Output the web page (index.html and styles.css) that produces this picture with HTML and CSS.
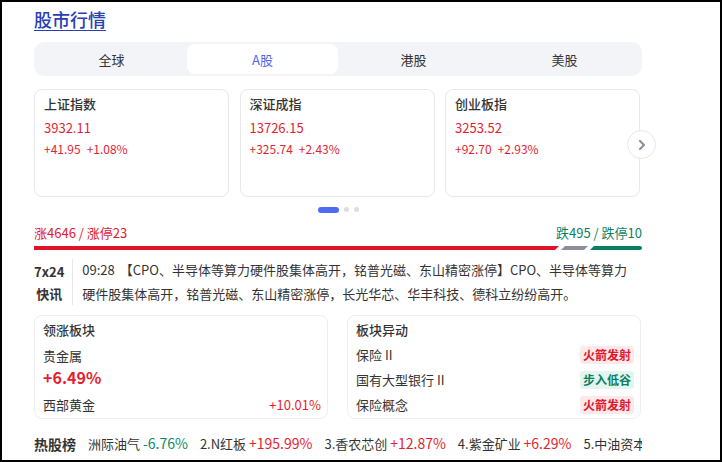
FILE: index.html
```html
<!DOCTYPE html>
<html lang="zh-CN">
<head>
  <meta charset="UTF-8" />
  <title>股市行情</title>
  <link rel="stylesheet" href="styles.css">
</head>
<body>
<div class="frame">
  <h1 class="page-title"><a href="#">股市行情</a></h1>

  <nav class="market-tabs">
    <a href="#">全球</a>
    <a href="#" class="active">A股</a>
    <a href="#">港股</a>
    <a href="#">美股</a>
  </nav>

  <div class="index-slider">
    <div class="index-cards">
      <div class="index-card">
        <div class="index-name">上证指数</div>
        <div class="index-value">3932.11</div>
        <div class="index-change"><span>+41.95</span><span>+1.08%</span></div>
      </div>
      <div class="index-card">
        <div class="index-name">深证成指</div>
        <div class="index-value">13726.15</div>
        <div class="index-change"><span>+325.74</span><span>+2.43%</span></div>
      </div>
      <div class="index-card">
        <div class="index-name">创业板指</div>
        <div class="index-value">3253.52</div>
        <div class="index-change"><span>+92.70</span><span>+2.93%</span></div>
      </div>
    </div>
    <button class="next-btn" type="button">
      <svg width="12" height="12" viewBox="0 0 12 12"><path d="M4 2 L8 6 L4 10" fill="none" stroke="#8b8fa0" stroke-width="2.2" stroke-linecap="round" stroke-linejoin="round"/></svg>
    </button>
  </div>

  <div class="dots">
    <span class="dot current"></span>
    <span class="dot"></span>
    <span class="dot"></span>
  </div>

  <div class="breadth">
    <div class="breadth-text">
      <span class="up">涨4646 / 涨停23</span>
      <span class="down">跌495 / 跌停10</span>
    </div>
    <div class="breadth-bar">
      <span class="seg-up"></span>
      <span class="seg-flat"></span>
      <span class="seg-down"></span>
    </div>
  </div>

  <div class="flash">
    <div class="flash-label">7x24<br>快讯</div>
    <p class="flash-text"><span class="time">09:28</span> 【CPO、半导体等算力硬件股集体高开，铭普光磁、东山精密涨停】CPO、半导体等算力硬件股集体高开，铭普光磁、东山精密涨停，长光华芯、华丰科技、德科立纷纷高开。</p>
  </div>

  <div class="panels">
    <div class="panel">
      <div class="panel-title">领涨板块</div>
      <div class="lead-name">贵金属</div>
      <div class="lead-pct">+6.49%</div>
      <div class="panel-row">
        <span>西部黄金</span>
        <span class="rise">+10.01%</span>
      </div>
    </div>
    <div class="panel">
      <div class="panel-title">板块异动</div>
      <div class="panel-row">
        <span>保险 II</span>
        <span class="tag tag-up">火箭发射</span>
      </div>
      <div class="panel-row">
        <span>国有大型银行 II</span>
        <span class="tag tag-down">步入低谷</span>
      </div>
      <div class="panel-row">
        <span>保险概念</span>
        <span class="tag tag-up">火箭发射</span>
      </div>
    </div>
  </div>

  <div class="hot-list">
    <span class="hot-label">热股榜</span>
    <div class="hot-track">
      <span>洲际油气 <em class="fall">-6.76%</em></span>
      <span>2.N红板 <em class="rise">+195.99%</em></span>
      <span>3.香农芯创 <em class="rise">+12.87%</em></span>
      <span>4.紫金矿业 <em class="rise">+6.29%</em></span>
      <span>5.中油资本 <em class="rise">+4.12%</em></span>
    </div>
  </div>
</div>
</body>
</html>
```

FILE: styles.css
```css
html, body {
  margin: 0;
  padding: 0;
  background: #fff;
}

body {
  font-family: "Noto Sans CJK SC", "Noto Sans", sans-serif;
  color: #333;
  font-size: 13px;
}

.frame {
  width: 722px;
  height: 462px;
  box-sizing: border-box;
  border: 2px solid #000;
  padding: 4px 78px 0 32px;
  overflow: hidden;
}

.page-title {
  margin: 0;
  font-size: 18px;
  line-height: 26px;
  font-weight: 500;
}

.page-title a {
  color: #2a40b2;
  text-decoration: underline;
  text-underline-offset: 3px;
  text-decoration-thickness: 1px;
}

.market-tabs {
  display: grid;
  grid-template-columns: repeat(4, 1fr);
  margin-top: 10px;
  padding: 2px;
  height: 30px;
  background: #f3f4f8;
  border-radius: 10px;
}

.market-tabs a {
  display: flex;
  align-items: center;
  justify-content: center;
  color: #333;
  text-decoration: none;
  border-radius: 8px;
  font-size: 13px;
}

.market-tabs a.active {
  background: #fff;
  color: #5466f0;
}

.index-slider {
  position: relative;
  margin-top: 13px;
}

.index-cards {
  display: grid;
  grid-template-columns: repeat(3, 195px);
  gap: 10.5px;
}

.index-card {
  height: 108px;
  box-sizing: border-box;
  border: 1px solid #e8e8ec;
  border-radius: 8px;
  padding: 4px 9px;
}

.index-name {
  font-size: 13px;
  font-weight: 500;
  color: #333;
  line-height: 20px;
}

.index-value {
  color: #e61e30;
  font-size: 13px;
  line-height: 20px;
  margin-top: 4px;
}

.index-change {
  color: #e61e30;
  font-size: 12px;
  line-height: 18px;
  margin-top: 2px;
  display: flex;
  gap: 6px;
}

.next-btn {
  position: absolute;
  left: 593px;
  top: 41px;
  width: 29px;
  height: 29px;
  border-radius: 50%;
  border: 1px solid #e6e7eb;
  background: #fff;
  padding: 0;
  display: flex;
  align-items: center;
  justify-content: center;
}

.dots {
  display: flex;
  justify-content: center;
  gap: 5px;
  margin-top: 10px;
  height: 6px;
}

.dot {
  width: 5px;
  height: 5px;
  border-radius: 50%;
  background: #dcdde3;
}

.dot.current {
  width: 21px;
  height: 6px;
  border-radius: 3px;
  background: #4f6cf0;
}

.breadth {
  margin-top: 10px;
}

.breadth-text {
  display: flex;
  justify-content: space-between;
  font-size: 13px;
  line-height: 20px;
}

.up { color: #e0182d; }
.down { color: #0b7f62; }

.breadth-bar {
  display: flex;
  gap: 2px;
  height: 4px;
  margin-top: 3px;
}

.seg-up {
  width: 525px;
  background: #dd1328;
  clip-path: polygon(0 0, 100% 0, calc(100% - 4px) 100%, 0 100%);
}

.seg-flat {
  width: 27px;
  background: #8e8f96;
  clip-path: polygon(4px 0, 100% 0, calc(100% - 4px) 100%, 0 100%);
}

.seg-down {
  flex: 1;
  background: #0b7f62;
  border-radius: 0 2px 2px 0;
  clip-path: polygon(4px 0, 100% 0, 100% 100%, 0 100%);
}

.flash {
  display: flex;
  margin-top: 8px;
}

.flash-label {
  flex: none;
  font-weight: bold;
  font-size: 13px;
  line-height: 22px;
  text-align: center;
  color: #333;
  padding: 2px 8px 0 0;
  border-right: 1px solid #e6e6e6;
  margin-right: 9px;
  height: 44px;
  margin-top: 1px;
}

.flash-text {
  margin: 0;
  padding-right: 6px;
  font-size: 13px;
  line-height: 24px;
  color: #333;
}

.flash-text .time {
  margin-right: 2px;
}

.panels {
  display: grid;
  grid-template-columns: 294px 294px;
  gap: 19px;
  margin-top: 9px;
}

.panel {
  height: 104px;
  box-sizing: border-box;
  border: 1px solid #eeeef0;
  border-radius: 8px;
  padding: 4px 6px 0 8px;
}

.panel-title {
  font-size: 13px;
  font-weight: 500;
  line-height: 20px;
  margin-bottom: 2px;
}

.lead-name {
  font-size: 13px;
  line-height: 20px;
  margin-top: 6px;
}

.lead-pct {
  color: #e61e30;
  font-size: 16px;
  font-weight: bold;
  line-height: 22px;
  margin-bottom: 4px;
}

.panel-row {
  display: flex;
  justify-content: space-between;
  align-items: center;
  height: 25px;
  font-size: 13px;
}

.rise { color: #e61e30; }
.fall { color: #0b8a6a; }

.tag {
  font-size: 12px;
  font-weight: bold;
  line-height: 18px;
  padding: 0 3px;
  border-radius: 3px;
}

.tag-up {
  color: #e0182d;
  background: #fde8ea;
}

.tag-down {
  color: #0b7f62;
  background: #e4f4ef;
}

.hot-list {
  display: flex;
  align-items: center;
  margin-top: 14px;
  white-space: nowrap;
  overflow: hidden;
  font-size: 13px;
  line-height: 20px;
}

.hot-label {
  font-weight: bold;
  font-size: 14px;
  margin-right: 12px;
  flex: none;
}

.hot-track {
  display: flex;
  gap: 12px;
  overflow: hidden;
}

.hot-track em {
  font-style: normal;
  font-size: 14px;
}
```
